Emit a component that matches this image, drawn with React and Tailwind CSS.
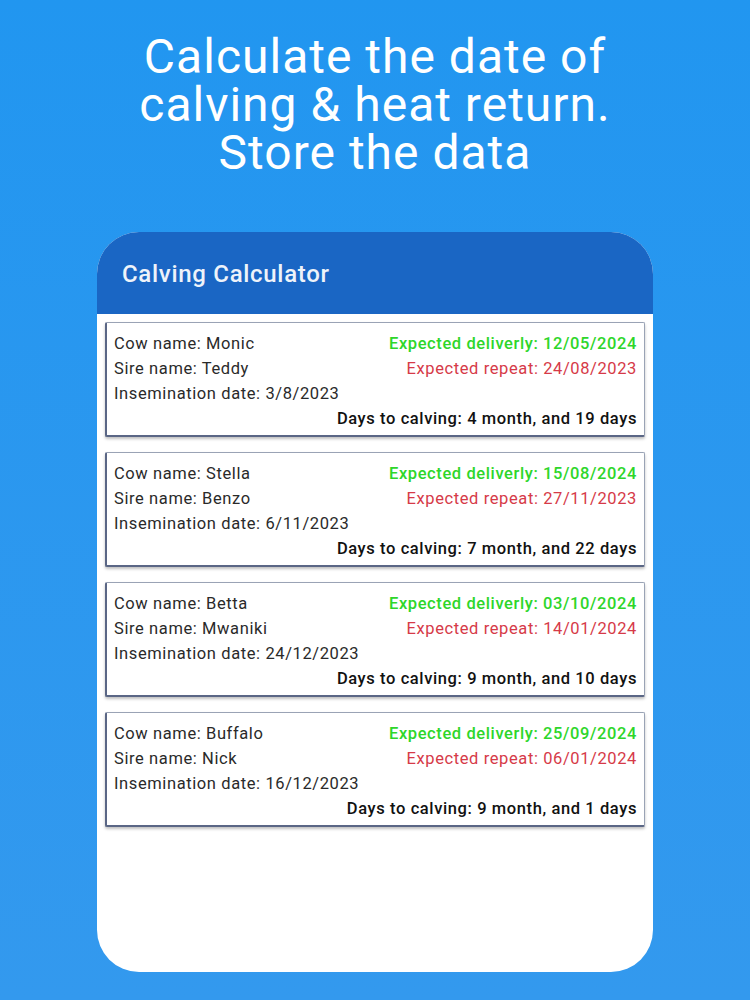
import React from "react";

const records = [
  {
    cow: "Monic",
    sire: "Teddy",
    insemination: "3/8/2023",
    delivery: "12/05/2024",
    repeat: "24/08/2023",
    days: "4 month, and 19 days",
  },
  {
    cow: "Stella",
    sire: "Benzo",
    insemination: "6/11/2023",
    delivery: "15/08/2024",
    repeat: "27/11/2023",
    days: "7 month, and 22 days",
  },
  {
    cow: "Betta",
    sire: "Mwaniki",
    insemination: "24/12/2023",
    delivery: "03/10/2024",
    repeat: "14/01/2024",
    days: "9 month, and 10 days",
  },
  {
    cow: "Buffalo",
    sire: "Nick",
    insemination: "16/12/2023",
    delivery: "25/09/2024",
    repeat: "06/01/2024",
    days: "9 month, and 1 days",
  },
];

const RecordCard = ({ r }) => (
  <div className="h-[115px] border border-[#9aa3b5] border-l-2 border-l-[#5a6685] border-b-2 border-b-[#5a6685] rounded-[2px] shadow-[0_2px_3px_rgba(0,0,0,0.25)] bg-white px-[7px] pt-[8px] text-[16.5px] tracking-[0.6px] leading-[25px] text-[#2a2a2a]">
    <div className="flex justify-between">
      <span>Cow name: {r.cow}</span>
      <span className="font-medium text-[#2ed62a]">Expected deliverly: {r.delivery}</span>
    </div>
    <div className="flex justify-between">
      <span>Sire name: {r.sire}</span>
      <span className="text-[#d63a48]">Expected repeat: {r.repeat}</span>
    </div>
    <div>Insemination date: {r.insemination}</div>
    <div className="text-right font-medium text-[#111]">Days to calving: {r.days}</div>
  </div>
);

export default function App() {
  return (
    <div
      className="w-[750px] h-[1000px] overflow-hidden bg-gradient-to-b from-[#2196f0] to-[#3399ee] flex flex-col items-center"
      style={{ fontFamily: "Roboto, 'Noto Sans', sans-serif" }}
    >
      <h1 className="pt-[33px] text-white text-[48px] tracking-[1px] leading-[48px] text-center font-normal">
        Calculate the date of
        <br />
        calving &amp; heat return.
        <br />
        Store the data
      </h1>
      <div className="mt-[55px] w-[556px] h-[740px] bg-white rounded-[42px] overflow-hidden flex flex-col">
        <div className="h-[82px] bg-[#1a66c4] pl-[25px] pt-[24px]">
          <span className="text-[#eef3fa] text-[24px] tracking-[0.7px] font-medium">Calving Calculator</span>
        </div>
        <div className="px-[8px] pt-[8px] flex flex-col gap-[15px]">
          {records.map((r) => (
            <RecordCard key={r.cow} r={r} />
          ))}
        </div>
      </div>
    </div>
  );
}
